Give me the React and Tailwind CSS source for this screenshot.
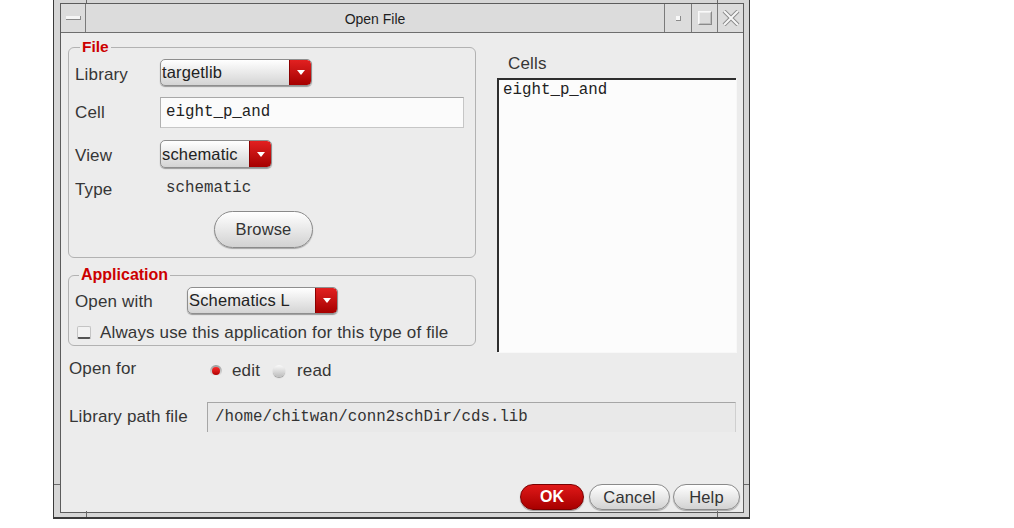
import React from 'react';

const mono = "font-['Liberation_Mono','DejaVu_Sans_Mono',monospace]";

function Arrow() {
  return (
    <div className="flex w-[22px] items-center justify-center rounded-r-[4px] border-l border-[#8a0000] bg-gradient-to-b from-[#e22020] to-[#a60000]">
      <div className="h-0 w-0 border-x-[4px] border-t-[5px] border-x-transparent border-t-white" />
    </div>
  );
}

function Combo({ className, value }) {
  return (
    <div className={`flex items-stretch overflow-hidden rounded-[5px] border border-[#8e8e8e] bg-gradient-to-b from-white to-[#d4d4d4] shadow-[0_1px_1px_rgba(0,0,0,0.35)] ${className}`}>
      <span className="flex flex-1 items-center pl-[1px] text-[16.5px] text-[#222]">{value}</span>
      <Arrow />
    </div>
  );
}

function Pill({ className, children }) {
  return (
    <div className={`flex items-center justify-center rounded-full border border-[#8a8a8a] bg-gradient-to-b from-white to-[#d2d2d2] text-[16.5px] text-[#333] shadow-[0_1px_1px_rgba(0,0,0,0.3)] ${className}`}>
      {children}
    </div>
  );
}

function CloseX() {
  return (
    <svg width="18" height="16" viewBox="0 0 18 16">
      <path d="M2 1 L16 15 M16 1 L2 15" stroke="#8c8c8c" strokeWidth="4" />
      <path d="M2 1 L16 15 M16 1 L2 15" stroke="#f6f6f6" strokeWidth="2" />
    </svg>
  );
}

export default function App() {
  return (
    <div className="h-[528px] w-[1014px] bg-white pl-[53px] font-['Liberation_Sans',Arial,sans-serif] text-[#363636]">
      <div className="relative flex h-[519px] w-[697px] flex-col border-x border-b-2 border-[#3a3a3a] bg-[#d6d6d6] pb-[4px] pl-[6px] pr-[5px] pt-[3px]">
        {/* resize handle notches in the frame */}
        <span className="absolute left-[32px] top-0 h-[3px] w-px bg-[#6a6a6a]" />
        <span className="absolute left-[663px] top-0 h-[3px] w-px bg-[#6a6a6a]" />
        <span className="absolute bottom-0 left-[32px] h-[6px] w-px bg-[#6a6a6a]" />
        <span className="absolute bottom-0 left-[663px] h-[6px] w-px bg-[#6a6a6a]" />
        <span className="absolute left-0 top-[484px] h-px w-[6px] bg-[#6a6a6a]" />
        <span className="absolute right-0 top-[484px] h-px w-[5px] bg-[#6a6a6a]" />

        <div className="flex flex-1 flex-col border border-[#5c5c5c]">
          {/* Title bar */}
          <div className="flex h-[29px] border-b border-[#6e6e6e] bg-[#dcdcdc]">
            <div className="flex w-[25px] items-center justify-center border-r border-[#7a7a7a]">
              <div className="h-[4px] w-[15px] border-b border-r border-[#8a8a8a] bg-[#f6f6f6]" />
            </div>
            <div className="flex flex-1 items-center justify-center pt-[3px] text-[14px] text-[#1e1e1e]">Open File</div>
            <div className="flex w-[27px] items-center justify-center border-l border-[#7a7a7a]">
              <div className="h-[5px] w-[5px] border-b border-r border-[#8a8a8a] bg-[#f8f8f8]" />
            </div>
            <div className="flex w-[26px] items-center justify-center border-l border-[#7a7a7a]">
              <div className="h-[14px] w-[14px] border border-b-[#8a8a8a] border-l-[#fafafa] border-r-[#8a8a8a] border-t-[#fafafa]">
                <div className="h-full w-full border border-b-[#bdbdbd] border-l-[#eeeeee] border-r-[#bdbdbd] border-t-[#eeeeee]" />
              </div>
            </div>
            <div className="flex w-[26px] items-center justify-center border-l border-[#7a7a7a]">
              <CloseX />
            </div>
          </div>

          {/* Content */}
          <div className="flex flex-1 flex-col bg-[#ececec] px-[7px] text-[17px] tracking-[0.15px]">
            <div className="flex items-start gap-[21px]">
              {/* Left column */}
              <div className="flex w-[408px] flex-col pt-[5px]">
                <fieldset className="rounded-[6px] border border-[#b2b2b2] px-[6px] pb-[9px]">
                  <legend className="ml-[5px] px-[2px] text-[15.5px] font-bold leading-[18px] tracking-normal text-[#cc0000]">File</legend>
                  <div className="mt-[3px] flex h-[27px] items-center">
                    <span className="mt-[4px] w-[85px]">Library</span>
                    <Combo className="h-[27px] w-[152px]" value="targetlib" />
                  </div>
                  <div className="mt-[11px] flex h-[31px] items-center">
                    <span className="w-[85px]">Cell</span>
                    <div className={`flex h-[31px] w-[304px] items-center border border-[#c6c6c6] border-l-[#b0b0b0] border-t-[#a8a8a8] bg-[#fbfbfb] pl-[5px] text-[15.8px] tracking-normal text-[#222] ${mono}`}>eight_p_and</div>
                  </div>
                  <div className="mt-[12px] flex h-[28px] items-center">
                    <span className="mt-[4px] w-[85px]">View</span>
                    <Combo className="h-[28px] w-[112px]" value="schematic" />
                  </div>
                  <div className="mt-[11px] flex h-[20px] items-center">
                    <span className="mt-[1px] w-[85px]">Type</span>
                    <span className={`ml-[6px] text-[15.8px] tracking-normal text-[#333] ${mono}`}>schematic</span>
                  </div>
                  <div className="mt-[12px] flex">
                    <Pill className="ml-[139px] h-[37px] w-[99px] rounded-[10px]">Browse</Pill>
                  </div>
                </fieldset>

                <fieldset className="mt-[8px] rounded-[6px] border border-[#b2b2b2] px-[6px] pb-[4px]">
                  <legend className="ml-[4px] px-[2px] text-[16px] font-bold leading-[18px] tracking-normal text-[#cc0000]">Application</legend>
                  <div className="mt-[3px] flex h-[27px] items-center">
                    <span className="mt-[3px] w-[112px]">Open with</span>
                    <Combo className="h-[27px] w-[151px]" value="Schematics L" />
                  </div>
                  <div className="mt-[10px] flex h-[17px] items-center">
                    <div className="ml-[2px] h-[13px] w-[14px] rounded-[2px] border border-[#c4c4c4] border-b-2 border-b-[#555] bg-[#f2f2f2]" />
                    <span className="ml-[9px]">Always use this application for this type of file</span>
                  </div>
                </fieldset>
              </div>

              {/* Right column */}
              <div className="flex w-[239px] flex-col pt-[22px]">
                <span className="pl-[11px] leading-[18px]">Cells</span>
                <div className={`mt-[5px] h-[274px] border-l-2 border-t-2 border-[#2e2e2e] bg-[#fcfcfc] pl-[4px] text-[15.8px] leading-[20px] tracking-normal text-[#222] shadow-[1px_1px_0_#f8f8f8] ${mono}`}>
                  eight_p_and
                </div>
              </div>
            </div>

            {/* Open for */}
            <div className="mt-[7px] flex h-[20px] items-center pl-[1px]">
              <span className="w-[141px]">Open for</span>
              <div className="mt-[4px] flex items-center">
                <div className="flex h-[12px] w-[12px] items-center justify-center rounded-full bg-gradient-to-b from-[#9a9a9a] to-[#f4f4f4]">
                  <div className="h-[8px] w-[8px] rounded-full bg-gradient-to-b from-[#ff2a2a] to-[#b00000]" />
                </div>
                <span className="ml-[10px]">edit</span>
                <div className="ml-[13px] h-[12px] w-[12px] rounded-full bg-gradient-to-b from-[#fafafa] to-[#bdbdbd] shadow-[0_1px_1px_rgba(0,0,0,0.35)]" />
                <span className="ml-[12px]">read</span>
              </div>
            </div>

            {/* Library path file */}
            <div className="mt-[23px] flex h-[30px] items-center pl-[1px]">
              <span className="w-[138px]">Library path file</span>
              <div className={`flex h-[30px] flex-1 items-center border-l border-r border-t border-[#a6a6a6] border-r-[#cfcfcf] bg-[#e9e9e9] pl-[7px] text-[15.8px] tracking-normal text-[#333] ${mono}`}>
                /home/chitwan/conn2schDir/cds.lib
              </div>
            </div>

            <div className="flex-1" />

            {/* Buttons */}
            <div className="-mr-[4px] flex justify-end pb-[2px]">
              <div className="flex h-[26px] w-[64px] items-center justify-center rounded-full border border-[#7a0000] bg-gradient-to-b from-[#e01818] to-[#a80000] text-[16px] font-bold tracking-normal text-white shadow-[0_1px_1px_rgba(0,0,0,0.35)]">OK</div>
              <Pill className="ml-[5px] h-[26px] w-[81px]">Cancel</Pill>
              <Pill className="ml-[3px] h-[26px] w-[67px]">Help</Pill>
            </div>
          </div>
        </div>
      </div>
    </div>
  );
}
